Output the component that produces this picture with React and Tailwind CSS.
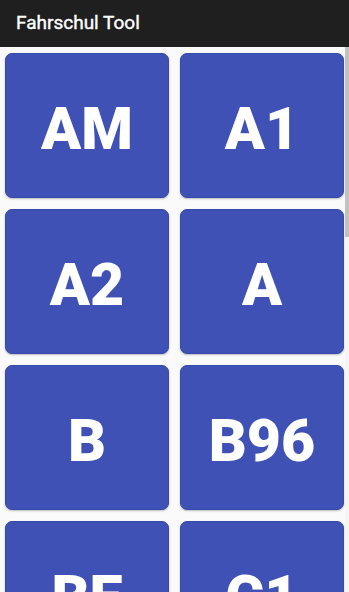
import React from "react";

const items = ["AM", "A1", "A2", "A", "B", "B96", "BE", "C1", "C1E", "C", "CE", "D1"];

export default function App() {
  return (
    <div className="h-[592px] w-[349px] flex flex-col bg-[#fafafa] overflow-hidden" style={{ fontFamily: "Roboto, 'Liberation Sans', sans-serif" }}>
      <div className="h-[47px] shrink-0 bg-[#1f1f1f] flex items-center pl-[16px]">
        <span className="text-white text-[19px] font-normal leading-none pb-[2px] [-webkit-text-stroke:0.4px_white]">Fahrschul Tool</span>
      </div>
      <div className="flex flex-1 min-h-0">
        <div className="flex-1 overflow-hidden pt-[6px] pl-[5px] pr-[1px]">
          <div className="grid grid-cols-2 gap-x-[11px] gap-y-[11px]">
            {items.map((t) => (
              <div
                key={t}
                className="h-[145px] rounded-[7px] bg-[#3f51b5] border border-[#3649ad] shadow-[0_1px_2px_rgba(0,0,0,0.25)] flex items-center justify-center"
              >
                <span className="text-white text-[59px] font-black leading-none pt-[5px]">{t}</span>
              </div>
            ))}
          </div>
        </div>
        <div className="w-[4px] shrink-0 bg-[#f5f5f5] flex flex-col">
          <div className="h-[190px] bg-[#c1c1c1]" />
        </div>
      </div>
    </div>
  );
}
